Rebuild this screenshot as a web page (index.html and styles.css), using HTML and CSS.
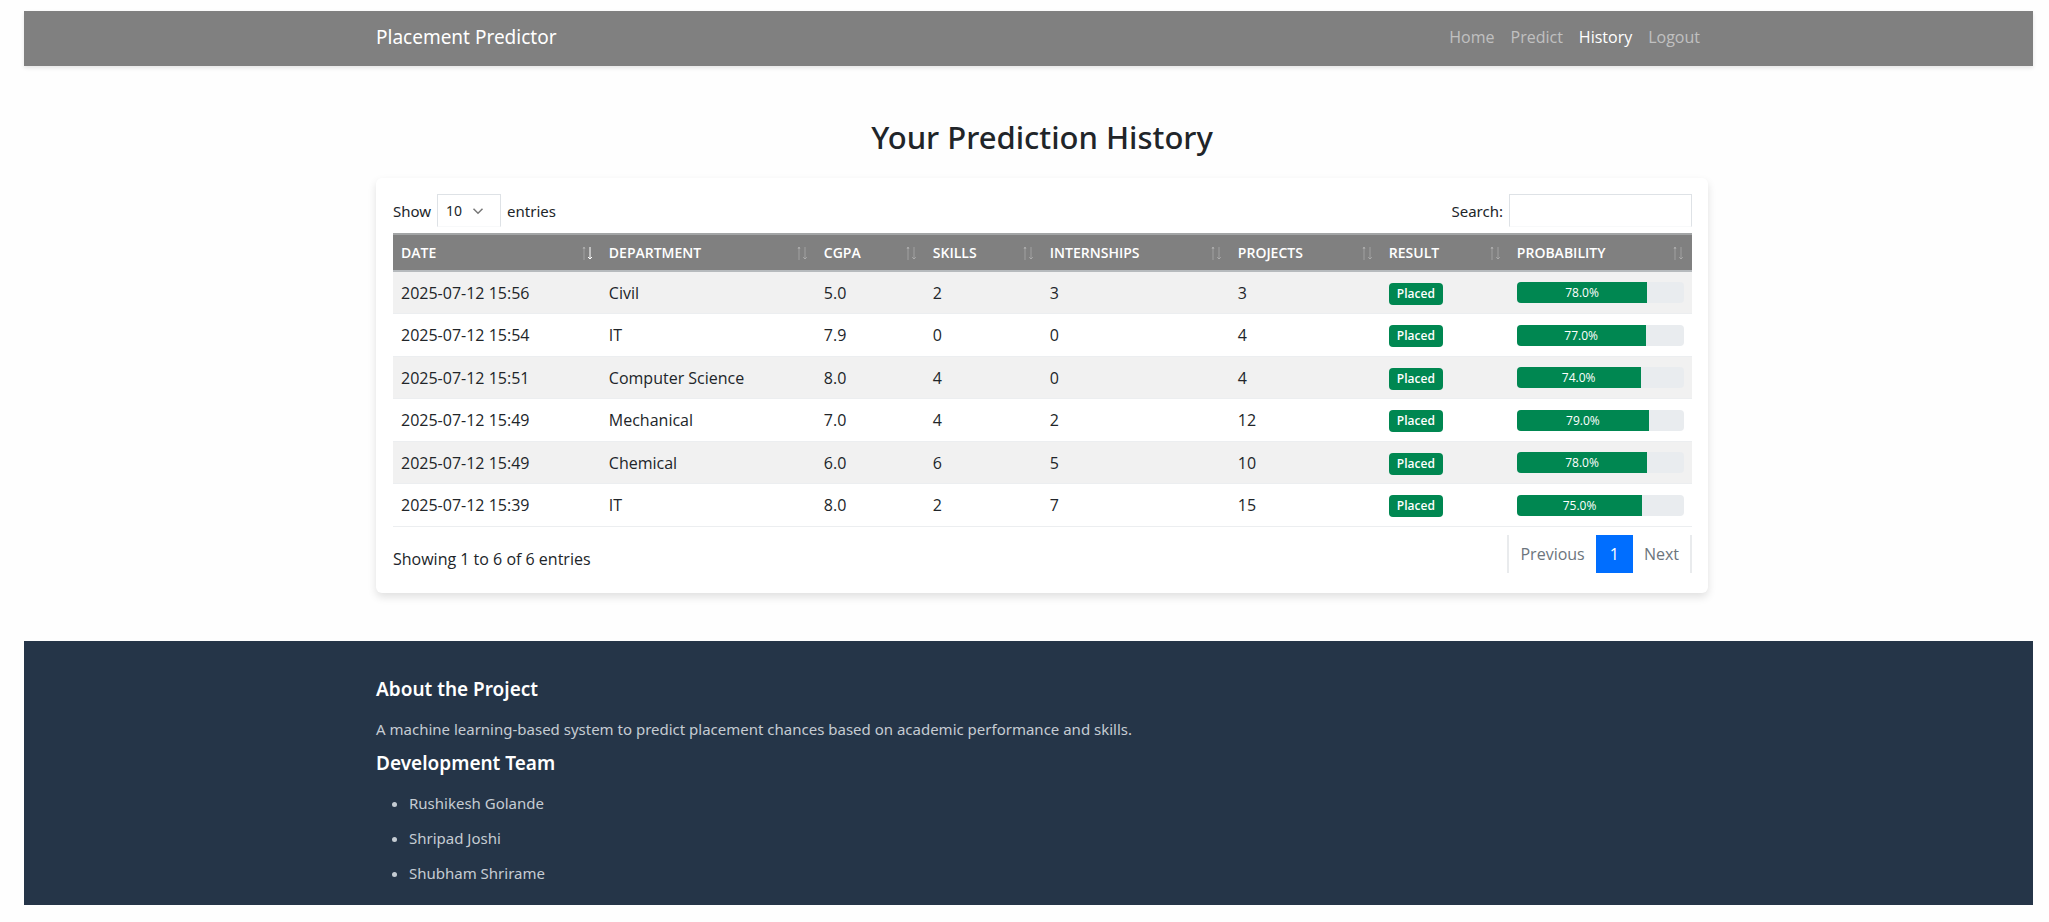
FILE: index.html
```html
<!DOCTYPE html>
<html lang="en">
<head>
    <meta charset="UTF-8">
    <meta name="viewport" content="width=device-width, initial-scale=1.0">
    <title>Prediction History - Placement Predictor</title>
    <link rel="stylesheet" href="styles.css">
</head>
<body>
    <svg width="0" height="0" class="sprite" aria-hidden="true">
        <symbol id="sort" viewBox="0 0 12 14">
            <path class="up" d="M3 14V1M2 3l1-2 1 2" />
            <path class="down" d="M9 1v12M7 11l2 2 2-2" />
        </symbol>
    </svg>

    <nav class="navbar">
        <div class="container navbar-inner">
            <a class="navbar-brand" href="#">Placement Predictor</a>
            <div class="navbar-nav">
                <a class="nav-link" href="#">Home</a>
                <a class="nav-link" href="#">Predict</a>
                <a class="nav-link active" href="#">History</a>
                <a class="nav-link" href="#">Logout</a>
            </div>
        </div>
    </nav>

    <main>
        <div class="container">
            <h2 class="page-title">Your Prediction History</h2>
            <div class="card">
                <div class="table-controls">
                    <label>Show
                        <select>
                            <option>10</option>
                            <option>25</option>
                            <option>50</option>
                            <option>100</option>
                        </select>
                        entries</label>
                    <label>Search: <input type="search"></label>
                </div>

                <table class="history">
                    <colgroup>
                        <col class="w-date">
                        <col class="w-department">
                        <col class="w-cgpa">
                        <col class="w-skills">
                        <col class="w-internships">
                        <col class="w-projects">
                        <col class="w-result">
                        <col>
                    </colgroup>
                    <thead>
                        <tr>
                            <th class="desc"><div>Date <svg><use href="#sort" /></svg></div></th>
                            <th><div>Department <svg><use href="#sort" /></svg></div></th>
                            <th><div>CGPA <svg><use href="#sort" /></svg></div></th>
                            <th><div>Skills <svg><use href="#sort" /></svg></div></th>
                            <th><div>Internships <svg><use href="#sort" /></svg></div></th>
                            <th><div>Projects <svg><use href="#sort" /></svg></div></th>
                            <th><div>Result <svg><use href="#sort" /></svg></div></th>
                            <th><div>Probability <svg><use href="#sort" /></svg></div></th>
                        </tr>
                    </thead>
                    <tbody>
                        <tr>
                            <td>2025-07-12 15:56</td>
                            <td>Civil</td>
                            <td>5.0</td>
                            <td>2</td>
                            <td>3</td>
                            <td>3</td>
                            <td><span class="badge">Placed</span></td>
                            <td><div class="progress"><div class="progress-bar" style="width: 78%">78.0%</div></div></td>
                        </tr>
                        <tr>
                            <td>2025-07-12 15:54</td>
                            <td>IT</td>
                            <td>7.9</td>
                            <td>0</td>
                            <td>0</td>
                            <td>4</td>
                            <td><span class="badge">Placed</span></td>
                            <td><div class="progress"><div class="progress-bar" style="width: 77%">77.0%</div></div></td>
                        </tr>
                        <tr>
                            <td>2025-07-12 15:51</td>
                            <td>Computer Science</td>
                            <td>8.0</td>
                            <td>4</td>
                            <td>0</td>
                            <td>4</td>
                            <td><span class="badge">Placed</span></td>
                            <td><div class="progress"><div class="progress-bar" style="width: 74%">74.0%</div></div></td>
                        </tr>
                        <tr>
                            <td>2025-07-12 15:49</td>
                            <td>Mechanical</td>
                            <td>7.0</td>
                            <td>4</td>
                            <td>2</td>
                            <td>12</td>
                            <td><span class="badge">Placed</span></td>
                            <td><div class="progress"><div class="progress-bar" style="width: 79%">79.0%</div></div></td>
                        </tr>
                        <tr>
                            <td>2025-07-12 15:49</td>
                            <td>Chemical</td>
                            <td>6.0</td>
                            <td>6</td>
                            <td>5</td>
                            <td>10</td>
                            <td><span class="badge">Placed</span></td>
                            <td><div class="progress"><div class="progress-bar" style="width: 78%">78.0%</div></div></td>
                        </tr>
                        <tr>
                            <td>2025-07-12 15:39</td>
                            <td>IT</td>
                            <td>8.0</td>
                            <td>2</td>
                            <td>7</td>
                            <td>15</td>
                            <td><span class="badge">Placed</span></td>
                            <td><div class="progress"><div class="progress-bar" style="width: 75%">75.0%</div></div></td>
                        </tr>
                    </tbody>
                </table>

                <div class="table-footer">
                    <div class="table-info">Showing 1 to 6 of 6 entries</div>
                    <div class="pagination">
                        <button type="button">Previous</button>
                        <button type="button" class="current">1</button>
                        <button type="button">Next</button>
                    </div>
                </div>
            </div>
        </div>
    </main>

    <footer class="footer">
        <div class="container">
            <h5>About the Project</h5>
            <p>A machine learning-based system to predict placement chances based on academic performance and skills.</p>
            <h5>Development Team</h5>
            <ul>
                <li>Rushikesh Golande</li>
                <li>Shripad Joshi</li>
                <li>Shubham Shrirame</li>
            </ul>
        </div>
    </footer>
</body>
</html>
```
FILE: styles.css
```css
* {
    box-sizing: border-box;
}

body {
    margin: 0;
    padding: 11px 16px 18px 24px;
    background: #fefefe;
    color: #212529;
    font-family: "Open Sans", "Noto Sans", sans-serif;
    font-size: 16px;
    line-height: 24px;
}

.sprite {
    position: absolute;
}

.navbar,
main,
.footer {
    padding-left: 27px;
}

.container {
    max-width: 1332px;
    margin: 0 auto;
}

.navbar-brand,
.page-title,
.table-controls,
.footer {
    font-family: "Noto Sans", sans-serif;
}

/* Navbar */
.navbar {
    background: #808080;
    box-shadow: 0 2px 4px rgba(0, 0, 0, 0.1);
}

.navbar-inner {
    display: flex;
    justify-content: space-between;
    align-items: center;
    height: 55px;
    padding-bottom: 4px;
}

.navbar a {
    text-decoration: none;
}

.navbar-brand {
    color: #fff;
    font-size: 19px;
}

.navbar-nav {
    display: flex;
}

.nav-link {
    padding: 0 8px;
    color: #c0c0c0;
}

.nav-link.active {
    color: #fff;
}

/* History card */
main {
    padding-top: 51px;
    padding-bottom: 48px;
}

.page-title {
    margin: 0 0 21px;
    font-size: 31px;
    font-weight: 500;
    line-height: 40px;
    text-align: center;
}

.card {
    padding: 16px 16px 20px 17px;
    border-radius: 6px;
    background: #fff;
    box-shadow: 0 4px 8px rgba(0, 0, 0, 0.12);
}

.table-controls,
.table-footer {
    display: flex;
    justify-content: space-between;
    align-items: center;
}

.table-controls {
    margin-bottom: 6px;
    font-size: 15px;
}

.table-controls label {
    display: flex;
    align-items: center;
    gap: 6px;
}

.table-controls select,
.table-controls input {
    height: 33px;
    border: 1px solid #dee2e6;
    border-bottom-color: #f8f9fa;
    background-color: #fff;
    color: #212529;
    font-family: inherit;
    font-size: 14px;
}

.table-controls select {
    width: 64px;
    padding: 0 8px;
    appearance: none;
    background-image: url("data:image/svg+xml,%3Csvg xmlns='http://www.w3.org/2000/svg' viewBox='0 0 16 16'%3E%3Cpath fill='none' stroke='%23777' stroke-width='2' d='m2 5 6 6 6-6'/%3E%3C/svg%3E");
    background-repeat: no-repeat;
    background-position: right 16px center;
    background-size: 12px;
}

.table-controls input {
    width: 183px;
    padding: 0 8px;
}

.history {
    width: 100%;
    table-layout: fixed;
    border-collapse: separate;
    border-spacing: 0;
}

.w-date { width: 16%; }
.w-department { width: 215px; }
.w-cgpa { width: 109px; }
.w-skills { width: 117px; }
.w-internships { width: 188px; }
.w-projects { width: 151px; }
.w-result { width: 128px; }

.history th {
    height: 39px;
    padding: 0 8px;
    border-top: 2px solid #a3a5a6;
    border-bottom: 2px solid #b6babd;
    background: #808080;
    color: #fff;
    font-size: 14px;
    font-weight: 600;
    text-align: left;
    text-transform: uppercase;
}

.history th div {
    display: flex;
    justify-content: space-between;
    align-items: center;
}

.history th svg {
    width: 12px;
    height: 14px;
    fill: none;
    stroke: #fff;
    --up: 0.25;
    --down: 0.25;
}

.history th.desc svg {
    --down: 1;
}

.up {
    opacity: var(--up);
}

.down {
    opacity: var(--down);
}

.history td {
    height: 42px;
    padding: 0 8px;
    border-bottom: 1px solid #eceef0;
}

.history tbody tr:nth-child(odd) {
    background: #f1f1f1;
}

.history tbody tr:nth-child(even) td {
    height: 43px;
}

.badge {
    display: inline-block;
    padding: 0 8px;
    border-radius: 4px;
    background: #008751;
    color: #fff;
    font-size: 12px;
    font-weight: 600;
    line-height: 22px;
    vertical-align: middle;
}

.progress {
    height: 21px;
    border-radius: 4px;
    overflow: hidden;
    background: #e9ecef;
}

.progress-bar {
    background: #008751;
    color: #fff;
    font-size: 12px;
    line-height: 21px;
    text-align: center;
}

.table-footer {
    margin-top: 8px;
}

.table-info {
    padding-top: 10px;
}

.pagination {
    display: flex;
    border: solid #e9ebed;
    border-width: 0 2px;
}

.pagination button {
    height: 38px;
    padding: 0 11px;
    border: 0;
    background: #fff;
    color: #6c757d;
    font-family: inherit;
    font-size: 16px;
}

.pagination .current {
    padding: 0 14px;
    background: #006eff;
    color: #fff;
}

/* Footer */
.footer {
    padding-top: 36px;
    padding-bottom: 9px;
    background: #253548;
    color: #c5ccd3;
    font-size: 15px;
}

.footer h5 {
    margin: 0 0 16px;
    color: #fff;
    font-size: 19px;
    font-weight: 600;
    line-height: 24px;
}

.footer p {
    margin: 0 0 10px;
}

.footer ul {
    margin: 0;
    padding-left: 33px;
    list-style: disc;
}

.footer li {
    margin-bottom: 11px;
}
```
